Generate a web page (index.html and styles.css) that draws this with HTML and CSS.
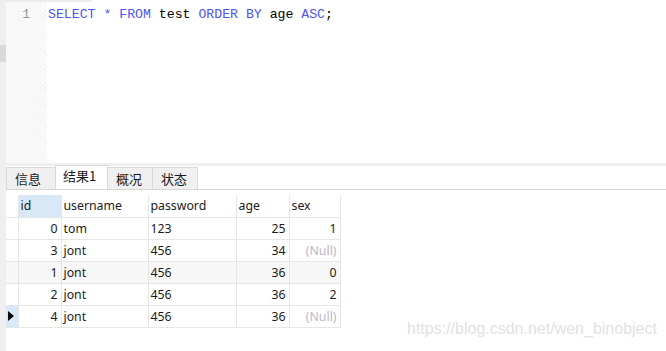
FILE: index.html
```html
<!DOCTYPE html>
<html lang="zh-CN">
<head>
    <meta charset="UTF-8">
    <title>查询</title>
    <link rel="stylesheet" href="styles.css">
</head>
<body>
    <div class="app">
        <div class="side">
            <div class="thumb"></div>
        </div>
        <div class="main">
            <div class="topline"></div>
            <div class="editor">
                <div class="gutter">1</div>
                <div class="fold"></div>
                <div class="code"><span class="kw">SELECT</span> <span class="kw">*</span> <span class="kw">FROM</span> test <span class="kw">ORDER</span> <span class="kw">BY</span> age <span class="kw">ASC</span>;</div>
            </div>
            <div class="split"></div>
            <div class="tabs">
                <div class="tab">信息</div>
                <div class="tab active">结果1</div>
                <div class="tab">概况</div>
                <div class="tab">状态</div>
            </div>
            <div class="result">
                <table class="grid">
                    <colgroup>
                        <col style="width:12px">
                        <col style="width:43px">
                        <col style="width:87px">
                        <col style="width:88px">
                        <col style="width:53px">
                        <col style="width:51px">
                    </colgroup>
                    <thead>
                        <tr>
                            <th class="rh"></th>
                            <th class="sel">id</th>
                            <th>username</th>
                            <th>password</th>
                            <th>age</th>
                            <th>sex</th>
                        </tr>
                    </thead>
                    <tbody>
                        <tr>
                            <td class="rh"></td>
                            <td class="num">0</td>
                            <td>tom</td>
                            <td>123</td>
                            <td class="num">25</td>
                            <td class="num">1</td>
                        </tr>
                        <tr>
                            <td class="rh"></td>
                            <td class="num">3</td>
                            <td>jont</td>
                            <td>456</td>
                            <td class="num">34</td>
                            <td class="num null">(Null)</td>
                        </tr>
                        <tr class="alt">
                            <td class="rh"></td>
                            <td class="num">1</td>
                            <td>jont</td>
                            <td>456</td>
                            <td class="num">36</td>
                            <td class="num">0</td>
                        </tr>
                        <tr>
                            <td class="rh"></td>
                            <td class="num">2</td>
                            <td>jont</td>
                            <td>456</td>
                            <td class="num">36</td>
                            <td class="num">2</td>
                        </tr>
                        <tr>
                            <td class="rh cur"><span class="arrow"></span></td>
                            <td class="num">4</td>
                            <td>jont</td>
                            <td>456</td>
                            <td class="num">36</td>
                            <td class="num null">(Null)</td>
                        </tr>
                    </tbody>
                </table>
            </div>
        </div>
        <div class="mark">https://blog.csdn.net/wen_binobject</div>
    </div>
</body>
</html>
```

FILE: styles.css
```css
*{
    margin: 0;
    padding: 0;
    box-sizing: border-box;
}
body{
    background: #fff;
    font-family: "Noto Sans", "Noto Sans CJK SC", sans-serif;
    color: #1a1a1a;
}
.app{
    display: flex;
    position: relative;
    width: 666px;
    height: 351px;
    overflow: hidden;
}
.side{
    width: 6px;
    background: #efefef;
    padding-top: 45px;
}
.side .thumb{
    height: 17px;
    background: #d9d9d9;
}
.main{
    flex: 1;
    display: flex;
    flex-direction: column;
}
.topline{
    width: 86px;
    height: 2px;
    background: #ececec;
}

/* editor */
.editor{
    height: 161px;
    display: flex;
}
.gutter{
    width: 29px;
    background: #f8f8f8;
    color: #8a96a3;
    font-family: "Liberation Mono", monospace;
    font-size: 13px;
    line-height: 16px;
    text-align: right;
    padding: 5px 5px 0 0;
}
.fold{
    width: 12px;
    background-color: #fbfbfb;
    background-image: repeating-linear-gradient(45deg, #f3f3f3 0 1px, transparent 1px 3px);
}
.code{
    flex: 1;
    font-family: "Liberation Mono", monospace;
    font-size: 13.2px;
    line-height: 16px;
    padding: 5px 0 0 1px;
    color: #000;
    white-space: pre;
}
.code .kw{
    color: #4e52f5;
}
.split{
    height: 3px;
    background: #efefef;
}

/* tabs */
.tabs{
    height: 24px;
    display: flex;
    align-items: flex-end;
    border-bottom: 1px solid #d6d6d6;
    font-family: "Noto Sans CJK SC", sans-serif;
    font-size: 13px;
}
.tab{
    height: 22px;
    width: 46px;
    background: #f0f0f0;
    border: 1px solid #d9d9d9;
    border-bottom: none;
    margin-right: -1px;
    padding: 2px 0 0 8px;
    line-height: 18px;
}
.tab:first-child{
    width: 50px;
}
.tab.active{
    height: 24px;
    width: 53px;
    background: #fff;
    padding: 1px 0 0 7px;
    position: relative;
    z-index: 1;
}

/* result grid */
.result{
    padding-top: 5px;
}
.grid{
    border-collapse: collapse;
    table-layout: fixed;
    width: 334px;
    font-size: 12.3px;
}
.grid th, .grid td{
    height: 22px;
    padding: 0 3px 0 2px;
    border-right: 1px solid #e6e6e6;
    border-bottom: 1px solid #e6e6e6;
    text-align: left;
    font-weight: 400;
    white-space: nowrap;
    overflow: hidden;
}
.grid th.sel{
    background: #d9e8f6;
}
.grid td.num{
    text-align: right;
}
.grid td.null{
    color: #b9b7cc;
}
.grid tr.alt td{
    background: #f7f7f7;
}
.grid .rh{
    padding: 0;
}
.grid td.rh.cur{
    background: #d9e8f6;
}
.arrow{
    display: block;
    width: 0;
    height: 0;
    margin-left: 2px;
    border-top: 5px solid transparent;
    border-bottom: 5px solid transparent;
    border-left: 6px solid #000;
}
.mark{
    position: absolute;
    left: 407px;
    top: 320px;
    font-family: "Liberation Sans", sans-serif;
    font-size: 16px;
    color: #e2e2e2;
}
```
